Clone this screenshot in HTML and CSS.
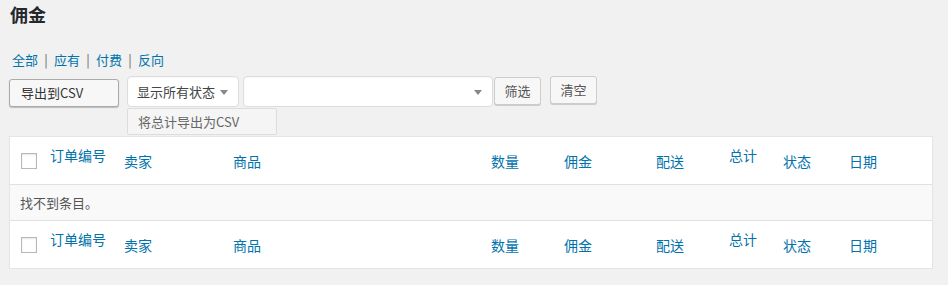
FILE: index.html
```html
<!DOCTYPE html>
<html lang="zh-CN">
<head>
  <meta charset="UTF-8" />
  <meta name="viewport" content="width=device-width, initial-scale=1.0"/>
  <title>佣金</title>
  <link rel="stylesheet" href="styles.css">
</head>
<body>
  <div class="wrap">
    <h1>佣金</h1>

    <ul class="subsubsub">
      <li><a href="#">全部</a></li>
      <li class="sep">|</li>
      <li><a href="#">应有</a></li>
      <li class="sep">|</li>
      <li><a href="#">付费</a></li>
      <li class="sep">|</li>
      <li><a href="#">反向</a></li>
    </ul>

    <div class="tablenav">
      <button class="button export-btn">导出到CSV</button>

      <div class="select-wrap">
        <div class="select status-select">
          <span>显示所有状态</span>
          <span class="arrow"></span>
        </div>
        <div class="export-menu">将总计导出为CSV</div>
      </div>

      <div class="select vendor-select">
        <span></span>
        <span class="arrow"></span>
      </div>

      <button class="button filter-btn">筛选</button>
      <button class="button clear-btn">清空</button>
    </div>

    <table class="list-table">
      <colgroup>
        <col style="width: 30px">
        <col style="width: 74px">
        <col style="width: 109px">
        <col style="width: 258px">
        <col style="width: 73px">
        <col style="width: 92px">
        <col style="width: 73px">
        <col style="width: 54px">
        <col style="width: 66px">
        <col>
      </colgroup>
      <thead>
        <tr>
          <th class="check-column"><input type="checkbox"></th>
          <th class="sortable"><a href="#">订单编号</a></th>
          <th><a href="#">卖家</a></th>
          <th><a href="#">商品</a></th>
          <th><a href="#">数量</a></th>
          <th><a href="#">佣金</a></th>
          <th><a href="#">配送</a></th>
          <th class="sortable"><a href="#">总计</a></th>
          <th><a href="#">状态</a></th>
          <th><a href="#">日期</a></th>
        </tr>
      </thead>
      <tbody>
        <tr class="no-items">
          <td colspan="10">找不到条目。</td>
        </tr>
      </tbody>
      <tfoot>
        <tr>
          <th class="check-column"><input type="checkbox"></th>
          <th class="sortable"><a href="#">订单编号</a></th>
          <th><a href="#">卖家</a></th>
          <th><a href="#">商品</a></th>
          <th><a href="#">数量</a></th>
          <th><a href="#">佣金</a></th>
          <th><a href="#">配送</a></th>
          <th class="sortable"><a href="#">总计</a></th>
          <th><a href="#">状态</a></th>
          <th><a href="#">日期</a></th>
        </tr>
      </tfoot>
    </table>
  </div>
</body>
</html>
```

FILE: styles.css
```css
body {
  margin: 0;
  background-color: #f1f1f1;
  font-family: "Noto Sans CJK SC", "Liberation Sans", sans-serif;
  font-size: 13px;
  color: #444;
}

a {
  color: #0073aa;
  text-decoration: none;
}

.wrap {
  padding: 0 15px 0 9px;
}

h1 {
  margin: 0;
  padding: 4px 0 0 1px;
  font-size: 18px;
  line-height: 20px;
  font-weight: bold;
  color: #23282d;
}

.subsubsub {
  list-style: none;
  margin: 26px 0 0;
  padding: 0 0 0 3px;
  display: flex;
  line-height: 20px;
  color: #666;
}

.subsubsub .sep {
  width: 4px;
  margin: 0 6px;
  text-align: center;
}

.tablenav {
  display: flex;
  align-items: flex-start;
  margin-top: 6px;
}

.button {
  height: 28px;
  padding: 0 9px;
  font-family: inherit;
  font-size: 13px;
  line-height: 26px;
  color: #555;
  background: #f7f7f7;
  border: 1px solid #ccc;
  border-radius: 3px;
  box-shadow: 0 1px 0 #ccc;
  text-align: center;
  white-space: nowrap;
  cursor: pointer;
}

.export-btn {
  width: 110px;
  margin-top: 3px;
  padding-left: 11px;
  text-align: left;
  color: #333;
  border-color: #aaa;
  box-shadow: 0 1px 1px #bbb;
}

.select-wrap {
  position: relative;
  margin-left: 8px;
}

.select {
  display: flex;
  align-items: center;
  justify-content: space-between;
  height: 31px;
  box-sizing: border-box;
  padding: 1px 10px 0 9px;
  background: #fff;
  border: 1px solid #ddd;
  border-radius: 4px;
  box-shadow: inset 0 1px 2px rgba(0, 0, 0, 0.04);
  color: #444;
  line-height: 28px;
}

.status-select {
  width: 112px;
}

.vendor-select {
  width: 250px;
  margin-left: 4px;
}

.arrow {
  width: 0;
  height: 0;
  border-left: 4px solid transparent;
  border-right: 4px solid transparent;
  border-top: 5px solid #888;
}

.export-menu {
  position: absolute;
  top: 32px;
  left: 0;
  width: 150px;
  box-sizing: border-box;
  height: 27px;
  padding: 0 10px;
  background: #f5f5f5;
  border: 1px solid #ddd;
  border-radius: 2px;
  line-height: 25px;
  color: #666;
  white-space: nowrap;
}

.filter-btn {
  width: 47px;
  margin: 1px 0 0 1px;
}

.clear-btn {
  width: 47px;
  margin-left: 9px;
}

.list-table {
  width: 924px;
  margin-top: 29px;
  table-layout: fixed;
  border-collapse: separate;
  border-spacing: 0;
  background: #fff;
  border: 1px solid #e5e5e5;
  box-shadow: 0 1px 1px rgba(0, 0, 0, 0.04);
}

.list-table th {
  height: 46px;
  padding: 0 10px;
  font-size: 14px;
  font-weight: normal;
  line-height: 20px;
  text-align: left;
  vertical-align: middle;
  white-space: nowrap;
}

.list-table thead th {
  border-bottom: 1px solid #e1e1e1;
}

.list-table tfoot th {
  border-top: 1px solid #e1e1e1;
}

.list-table th.sortable {
  vertical-align: top;
  padding-top: 8px;
  height: 38px;
}

.list-table th.check-column {
  padding: 1px 0 0 11px;
}

.check-column input {
  appearance: none;
  display: block;
  margin: 0;
  width: 16px;
  height: 16px;
  background: #fff;
  border: 1px solid #b4b9be;
  box-shadow: inset 0 1px 2px rgba(0, 0, 0, 0.1);
}

.no-items td {
  height: 35px;
  padding: 0 10px;
  background: #f9f9f9;
  color: #555;
  line-height: 20px;
}
```
